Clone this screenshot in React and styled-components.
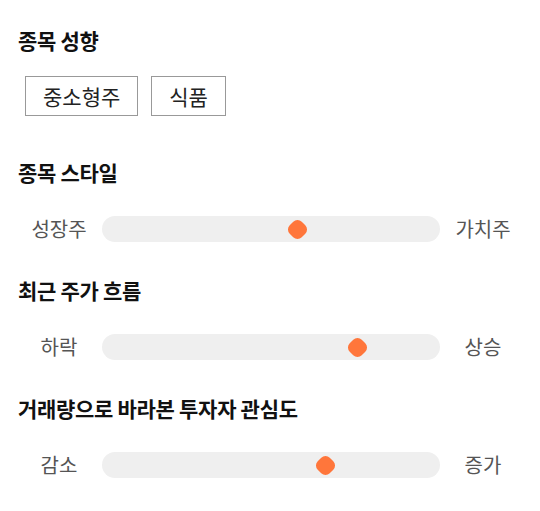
import React from 'react';
import styled, { createGlobalStyle } from 'styled-components';

const GlobalStyle = createGlobalStyle`
  body {
    margin: 0;
    background: #fff;
    font-family: "Noto Sans CJK KR", "Noto Sans", sans-serif;
    color: #111;
  }
`;

const Page = styled.div`
  width: 540px;
  padding: 26px 18px 0;
  box-sizing: border-box;
`;

const Section = styled.section`
  margin-bottom: ${(p) => p.gap || 24}px;
`;

const Heading = styled.h2`
  margin: 0;
  font-size: 21px;
  font-weight: 700;
  line-height: 28px;
  letter-spacing: -0.3px;
`;

const ChipRow = styled.div`
  display: flex;
  gap: 13px;
  padding: 22px 7px 0;
`;

const Chip = styled.span`
  display: inline-flex;
  align-items: center;
  justify-content: center;
  height: 40px;
  padding: 0 17px;
  box-sizing: border-box;
  border: 1px solid #999;
  font-size: 21px;
  color: #222;
`;

const SliderRow = styled.div`
  display: grid;
  grid-template-columns: 82px 1fr 82px;
  column-gap: 2px;
  align-items: center;
  margin-top: 30px;
  margin-right: -2px;
`;

const SideLabel = styled.span`
  text-align: center;
  font-size: 20px;
  line-height: 26px;
  color: #555;
`;

const Track = styled.div`
  position: relative;
  height: 26px;
  border-radius: 13px;
  background: #efefef;
`;

const Thumb = styled.div`
  position: absolute;
  top: 50%;
  width: 17px;
  height: 17px;
  margin: -8.5px 0 0 -8.5px;
  background: #ff763b;
  border-radius: 6px;
  transform: rotate(45deg);
`;

const sliders = [
  { title: '종목 스타일', left: '성장주', right: '가치주', value: 0.577 },
  { title: '최근 주가 흐름', left: '하락', right: '상승', value: 0.755 },
  { title: '거래량으로 바라본 투자자 관심도', left: '감소', right: '증가', value: 0.66 },
];

const App = () => {
  return (
    <>
      <GlobalStyle />
      <Page>
        <Section gap={42}>
          <Heading>종목 성향</Heading>
          <ChipRow>
            <Chip>중소형주</Chip>
            <Chip>식품</Chip>
          </ChipRow>
        </Section>
        {sliders.map((s) => (
          <Section key={s.title} gap={34}>
            <Heading>{s.title}</Heading>
            <SliderRow>
              <SideLabel>{s.left}</SideLabel>
              <Track>
                <Thumb style={{ left: `${s.value * 100}%` }} />
              </Track>
              <SideLabel>{s.right}</SideLabel>
            </SliderRow>
          </Section>
        ))}
      </Page>
    </>
  );
};

export default App;
